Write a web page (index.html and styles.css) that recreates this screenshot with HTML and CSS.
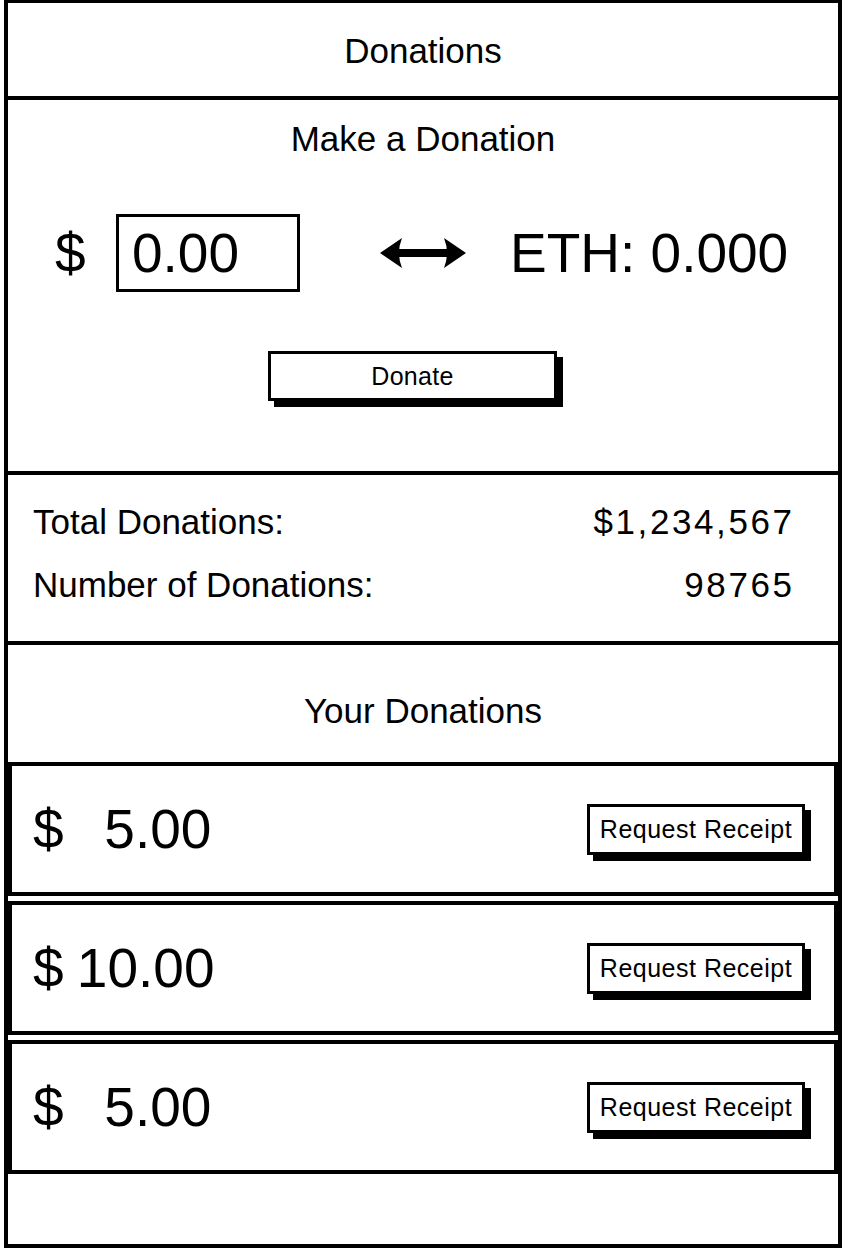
FILE: index.html
```html
<!DOCTYPE html>
<html lang="en">
<head>
<meta charset="utf-8">
<title>Donations</title>
<link rel="stylesheet" href="styles.css">
</head>
<body>
<div class="frame">
  <header class="hdr">Donations</header>
  <section class="make">
    <h2 class="title">Make a Donation</h2>
    <div class="conv">
      <span class="cur">$</span>
      <div class="input">0.00</div>
      <svg class="arrow" width="86" height="30" viewBox="0 0 86 30" aria-hidden="true">
        <path d="M0 15 L22 0 Q16 15 22 30 Z" fill="#000"/>
        <path d="M86 15 L64 0 Q70 15 64 30 Z" fill="#000"/>
        <rect x="12" y="11" width="62" height="8" fill="#000"/>
      </svg>
      <span class="eth">ETH: 0.000</span>
    </div>
    <button class="btn donate">Donate</button>
  </section>
  <section class="stats">
    <div class="stat"><span>Total Donations:</span><span class="val">$1,234,567</span></div>
    <div class="stat"><span>Number of Donations:</span><span class="val">98765</span></div>
  </section>
  <section class="yours">
    <h2 class="title">Your Donations</h2>
  </section>
  <div class="list">
    <div class="card"><span class="amt">$&ensp; 5.00</span><button class="btn receipt">Request Receipt</button></div>
    <div class="card"><span class="amt">$ 10.00</span><button class="btn receipt">Request Receipt</button></div>
    <div class="card"><span class="amt">$&ensp; 5.00</span><button class="btn receipt">Request Receipt</button></div>
  </div>
  <div class="foot"></div>
</div>
</body>
</html>
```
FILE: styles.css
```css
* { box-sizing: border-box; }
html, body { margin: 0; padding: 0; background: #fff; }
body { font-family: "Liberation Sans", Arial, sans-serif; color: #000; }

.frame {
  margin-left: 4px;
  width: 838px;
  height: 1248px;
  border: 4px solid #000;
  border-top-width: 3px;
  display: flex;
  flex-direction: column;
}

.hdr {
  height: 97px;
  border-bottom: 4px solid #000;
  display: flex;
  align-items: center;
  justify-content: center;
  font-size: 35px;
  padding-top: 2px;
}

.title {
  margin: 0;
  font-weight: normal;
  font-size: 35px;
  line-height: 40px;
  text-align: center;
}

.make {
  height: 375px;
  border-bottom: 4px solid #000;
  padding-top: 19px;
  display: flex;
  flex-direction: column;
}

.conv {
  margin-top: 55px;
  height: 78px;
  display: flex;
  align-items: center;
  padding-left: 47px;
  font-size: 55px;
}
.cur { width: 31px; }
.input {
  margin-left: 30px;
  width: 184px;
  height: 78px;
  border: 3px solid #000;
  padding-left: 13px;
  line-height: 72px;
}
.arrow { margin-left: 80px; flex: none; }
.eth { margin-left: 44px; }

.btn {
  font-family: "Liberation Sans", Arial, sans-serif;
  background: #fff;
  color: #000;
  border: 3px solid #000;
  box-shadow: 6px 6px 0 #000;
  padding: 0;
  cursor: pointer;
}
.donate {
  margin-top: 59px;
  margin-left: 260px;
  width: 289px;
  height: 50px;
  font-size: 25px;
  letter-spacing: 0.3px;
}

.stats {
  height: 170px;
  border-bottom: 4px solid #000;
  padding: 27px 46px 0 25px;
  display: flex;
  flex-direction: column;
  gap: 23px;
}
.stat {
  display: flex;
  justify-content: space-between;
  font-size: 35px;
  line-height: 40px;
}
.val { letter-spacing: 2.6px; margin-right: -2.6px; }

.yours {
  height: 117px;
  padding-top: 46px;
}

.list {
  display: flex;
  flex-direction: column;
  gap: 5px;
}
.card {
  height: 134px;
  border: 4px solid #000;
  display: flex;
  align-items: center;
  justify-content: space-between;
  padding: 0 29px 0 21px;
}
.amt {
  font-size: 55px;
  word-spacing: -2px;
}
.receipt {
  width: 218px;
  height: 51px;
  font-size: 25px;
  letter-spacing: 0.5px;
}

.foot { flex: 1; }
```
